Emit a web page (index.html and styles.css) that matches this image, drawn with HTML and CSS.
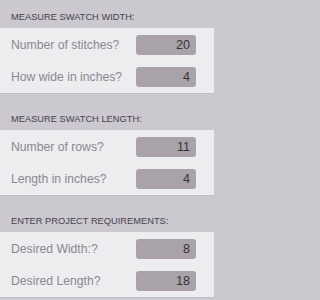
FILE: index.html
```html
<!DOCTYPE html>
<html>
<head>
<meta charset="utf-8">
<link rel="stylesheet" href="styles.css">
</head>
<body>
<div class="page">
  <div class="head first">MEASURE SWATCH WIDTH:</div>
  <div class="group">
    <div class="row"><span class="label">Number of stitches?</span><span class="field">20</span></div>
    <div class="row"><span class="label">How wide in inches?</span><span class="field">4</span></div>
  </div>
  <div class="head">MEASURE SWATCH LENGTH:</div>
  <div class="group">
    <div class="row"><span class="label">Number of rows?</span><span class="field">11</span></div>
    <div class="row"><span class="label">Length in inches?</span><span class="field">4</span></div>
  </div>
  <div class="head">ENTER PROJECT REQUIREMENTS:</div>
  <div class="group">
    <div class="row"><span class="label">Desired Width:?</span><span class="field">8</span></div>
    <div class="row"><span class="label">Desired Length?</span><span class="field">18</span></div>
  </div>
</div>
</body>
</html>
```

FILE: styles.css
```css
html, body {
  margin: 0;
  padding: 0;
  background: #cbc8d0;
}
body {
  font-family: "Liberation Sans", Arial, sans-serif;
  width: 214px;
  height: 300px;
  overflow: hidden;
}
.page {
  display: flex;
  flex-direction: column;
}
.head {
  height: 36px;
  box-sizing: border-box;
  display: flex;
  align-items: flex-end;
  padding: 0 11px 5px;
  font-size: 9.3px;
  line-height: 11px;
  color: #46424b;
  background: #cbc8d0;
}
.head.first {
  height: 28px;
}
.group {
  background: #edecef;
  padding: 1px 0;
  border-bottom: 1px solid #c3bfc8;
  box-sizing: border-box;
  height: 66px;
}
.row {
  height: 32px;
  display: flex;
  align-items: center;
  justify-content: space-between;
  padding: 0 18px 0 11px;
}
.label {
  font-size: 12.2px;
  color: #8a898e;
}
.field {
  width: 60px;
  height: 20px;
  box-sizing: border-box;
  border-radius: 3px;
  background: #a9a2aa;
  color: #363338;
  font-size: 12.5px;
  line-height: 20px;
  text-align: right;
  padding-right: 6px;
}
```
